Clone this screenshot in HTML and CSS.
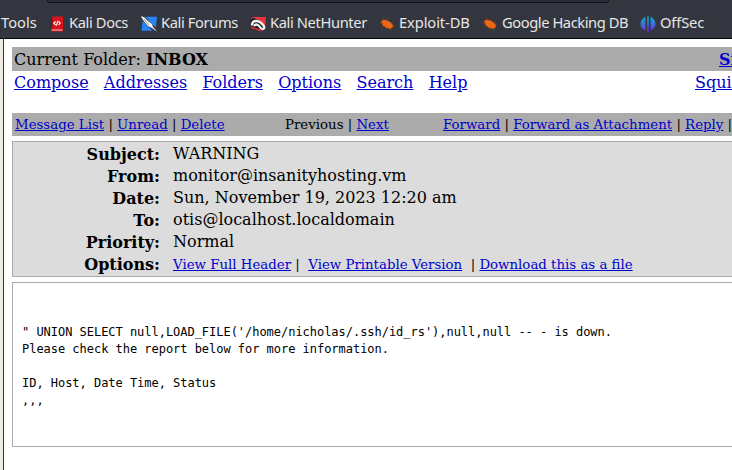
FILE: index.html
```html
<!DOCTYPE html>
<html lang="en">
<head>
<meta charset="utf-8">
<title>SquirrelMail</title>
<link rel="stylesheet" href="styles.css">
</head>
<body>
<header class="browser">
  <div class="urlbar"></div>
  <nav class="bookmarks">
    <span class="bookmark tools">Tools</span>
    <span class="bookmark docs"><svg width="16" height="16" viewBox="0 0 16 16"><path fill="#d9141c" d="M2 .5h12v15H2z"/><path fill="#8e0c12" d="M2 .5h1.500v13H2z"/><path fill="#e8c8c8" d="M2.500 13.500h11v1h-11z"/><path d="M6.500 5.500 4.800 7.300 6.800 9M9.500 5.300l1.800 1.800-1.800 1.800M8.800 4.800 7.400 9.600" fill="none" stroke="#fff" stroke-width="1.100"/></svg><span>Kali Docs</span></span>
    <span class="bookmark forums"><svg width="16" height="16" viewBox="0 0 16 16"><path fill="#2684f5" d="M2 .8h14l-1.500 14H.5z"/><path d="M1 1 14 14" stroke="#34363f" stroke-width="4.500"/><path fill="#f5f5f2" d="m0 0 3.500 1.500L7 5l4 3 1 3 4 4.500-5.500-3.800L7 10 3.500 6 .8 2z"/><path d="m3 3 5 6" stroke="#686b73" stroke-width=".7"/></svg><span>Kali Forums</span></span>
    <span class="bookmark hunter"><svg width="16" height="16" viewBox="0 0 16 16"><path fill="#f0343c" d="M1 1h15l-1 10-4-5z"/><path fill="#191a20" d="M0 5 4 2l6 3 4 6-2 3H4z"/><path d="M2 9.500C2 3.500 9 3.500 13.500 9.500c2 3-.5 4.500-2.800 2.500C8 7.500 5.500 8 4 10" fill="none" stroke="#f4f4f4" stroke-width="2.300"/><path d="M1.500 11.500c4 .5 5 2.500 10.500 2.800" fill="none" stroke="#dc303b" stroke-width="1.800"/></svg><span>Kali NetHunter</span></span>
    <span class="bookmark exploit"><svg width="16" height="16" viewBox="0 0 16 16"><path fill="#f06511" d="M2 5 5 3.500l5 1.700 3.500 3L14 11l-3 2-4.500-1.500L3.500 9z"/><path d="M5 5 4.200 2M8 5l1-2.800M11 7l3-.8M13 9l2.500.8M4 7 .5 7.300M6 10l-3.300 1.500M8 11l-1 2.500M11 12l1 2.500" stroke="#8c452a" stroke-width=".7"/></svg><span>Exploit-DB</span></span>
    <span class="bookmark hacking"><svg width="16" height="16" viewBox="0 0 16 16"><path fill="#f06511" d="M2 5 5 3.500l5 1.700 3.500 3L14 11l-3 2-4.500-1.500L3.500 9z"/><path d="M5 5 4.200 2M8 5l1-2.800M11 7l3-.8M13 9l2.500.8M4 7 .5 7.300M6 10l-3.300 1.500M8 11l-1 2.500M11 12l1 2.500" stroke="#8c452a" stroke-width=".7"/></svg><span>Google Hacking DB</span></span>
    <span class="bookmark offsec"><svg width="16" height="16" viewBox="0 0 16 16"><defs><linearGradient id="g" gradientUnits="userSpaceOnUse" x1="0" y1="0" x2="0" y2="16"><stop offset="0" stop-color="#12a8bc"/><stop offset=".5" stop-color="#3972df"/><stop offset="1" stop-color="#6f25c4"/></linearGradient></defs><path fill="url(#g)" d="M5.500 1v13.500C2.200 13.500.5 11 .5 8S2.200 2 5.500 1zM10.500 1v13.500c3.300-1 5-3.500 5-6.500s-1.700-6-5-7zM7.200.3h1.600v15.400H7.200z"/></svg><span>OffSec</span></span>
  </nav>
</header>
<main class="mail">
  <div class="folder"><span>Current Folder: <b>INBOX</b></span><a href="#" class="edge"><b>Sign Out</b></a></div>
  <nav class="menu">
    <a href="#">Compose</a><a href="#">Addresses</a><a href="#">Folders</a><a href="#">Options</a><a href="#">Search</a><a href="#">Help</a><a href="#" class="edge squirrel">SquirrelMail</a>
  </nav>
  <div class="toolbar">
    <span class="left"><a href="#">Message List</a> | <a href="#">Unread</a> | <a href="#">Delete</a></span>
    <span class="middle">Previous | <a href="#">Next</a></span>
    <span class="right"><a href="#">Forward</a> | <a href="#">Forward as Attachment</a> | <a href="#">Reply</a> |</span>
  </div>
  <dl class="headers">
    <dt>Subject:</dt><dd>WARNING</dd>
    <dt>From:</dt><dd>monitor@insanityhosting.vm</dd>
    <dt>Date:</dt><dd>Sun, November 19, 2023 12:20 am</dd>
    <dt>To:</dt><dd>otis@localhost.localdomain</dd>
    <dt>Priority:</dt><dd>Normal</dd>
    <dt>Options:</dt><dd class="small"><a href="#">View Full Header</a> |&nbsp; <a href="#">View Printable Version</a>&nbsp; | <a href="#">Download this as a file</a></dd>
  </dl>
  <pre class="message">" UNION SELECT null,LOAD_FILE('/home/nicholas/.ssh/id_rs'),null,null -- - is down.
Please check the report below for more information.

ID, Host, Date Time, Status
,,,</pre>
</main>
</body>
</html>
```
FILE: styles.css
```css
* { box-sizing: border-box; }
body { margin: 0; height: 470px; overflow: hidden; background: #fff; color: #000; font: 16px/22px "DejaVu Serif", serif; }
a { color: #00c; text-decoration: underline; }
.browser { height: 39px; background: #33363f; border-bottom: 1px solid #08080a; }
.urlbar { width: 562px; height: 3px; margin-left: 47px; background: #292c38; border: 1px solid #101116; border-top: 0; border-radius: 0 0 4px 4px; }
.bookmarks { display: flex; height: 35px; padding-left: 1px; color: #e6e6e6; font: 14.7px/39px "Noto Sans", sans-serif; letter-spacing: -.38px; white-space: nowrap; }
.bookmark { display: flex; flex: none; align-items: center; gap: 4px; height: 39px; }
.bookmark svg { flex: none; position: relative; top: 1px; }
.tools { width: 48px; letter-spacing: 0; }
.docs { width: 92px; }
.forums { width: 109px; }
.hunter { width: 129px; }
.exploit { width: 103px; letter-spacing: -.1px; }
.hacking { width: 158px; letter-spacing: -.43px; }
.offsec { letter-spacing: -.15px; }
.mail { height: 431px; padding: 8px 0 0 8px; margin-left: 3px; border-left: 1px solid #36322b; overflow: hidden; box-shadow: -3px 0 #efebe5; }
.folder, .menu { display: flex; align-items: center; height: 24px; padding-left: 2px; white-space: nowrap; }
.folder { padding-top: 2px; background: #ababab; }
.edge { flex: none; width: 13px; margin-left: auto; }
.menu { gap: 15.25px; }
.squirrel { width: 37px; }
.toolbar { display: flex; height: 23px; margin-top: 18px; padding-left: 3px; background: #ababab; font-size: 13.33px; line-height: 23px; white-space: nowrap; }
.toolbar span { flex: none; }
.left { width: 270px; }
.middle { width: 158px; }
.headers { display: grid; grid-template-columns: 147px 1fr; grid-auto-rows: 22px; column-gap: 13px; height: 136px; margin: 5px 0 0; padding-top: 1px; background: #dcdcdc; border: 1px solid #ababab; border-right: 0; white-space: nowrap; }
dt { font-weight: bold; text-align: right; padding-top: 1px; }
dd { margin: 0; }
.small { font-size: 13.33px; padding-top: 1px; }
.message { height: 165px; margin: 5px 0 0; padding: 41px 0 0 9px; border: 1px solid #ababab; border-right: 0; font: 12px/17px "DejaVu Sans Mono", monospace; letter-spacing: -.03px; }
```
